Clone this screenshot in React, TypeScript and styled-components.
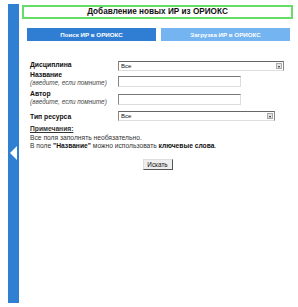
import * as React from "react";
import styled, { createGlobalStyle } from "styled-components";

const Global = createGlobalStyle`
  html, body { margin: 0; padding: 0; background: #fff; }
  body { font-family: "Liberation Sans", Arial, sans-serif; color: #111; }
`;

const Page = styled.div`
  display: flex;
  width: 298px;
  height: 307px;
  padding-top: 4px;
  box-sizing: border-box;
`;

const SideBar = styled.div`
  width: 11px;
  height: 299px;
  margin-left: 8px;
  background: #2f80d3;
  display: flex;
  align-items: center;
  justify-content: center;
  flex-shrink: 0;
`;

const Arrow = styled.div`
  width: 0;
  height: 0;
  border-top: 7px solid transparent;
  border-bottom: 7px solid transparent;
  border-right: 7px solid #fff;
  margin-top: -2px;
`;

const Main = styled.div`
  margin-left: 3px;
  width: 271px;
  display: flex;
  flex-direction: column;
`;

const Title = styled.div`
  border: 2px solid #66dd66;
  height: 10px;
  line-height: 10px;
  text-align: center;
  font-size: 8.2px;
  font-weight: bold;
  margin-top: 1px;
`;

const Tabs = styled.div`
  display: flex;
  gap: 5px;
  margin: 9px 3px 0 5px;
`;

const Tab = styled.div<{ $active?: boolean }>`
  flex: 1;
  height: 13px;
  line-height: 13px;
  text-align: center;
  color: #fff;
  font-size: 6.2px;
  font-weight: bold;
  background: ${(p) => (p.$active ? "#2f7ed4" : "#74b4f0")};
`;

const Form = styled.div`
  display: grid;
  grid-template-columns: 88px 1fr;
  margin: 18px 0 0 8px;
  align-items: start;
`;

const Label = styled.div`
  font-size: 6.8px;
  font-weight: bold;
  line-height: 8px;
`;

const Hint = styled.div`
  font-size: 6.4px;
  font-style: italic;
  line-height: 8px;
  color: #444;
  white-space: nowrap;
`;

const Select = styled.div<{ $w: number }>`
  width: ${(p) => p.$w}px;
  height: 8px;
  border: 1px solid #888;
  border-top-color: #666;
  border-bottom-color: #ddd;
  font-size: 6px;
  line-height: 8px;
  padding-left: 2px;
  position: relative;
`;

const DropBtn = styled.div`
  position: absolute;
  right: 1px;
  top: 1px;
  width: 6px;
  height: 6px;
  background: #e4e4e4;
  border: 1px solid #aaa;
  box-sizing: border-box;
  &::after {
    content: "";
    position: absolute;
    left: 1px;
    top: 2px;
    border-left: 1.5px solid transparent;
    border-right: 1.5px solid transparent;
    border-top: 2px solid #222;
  }
`;

const Input = styled.div`
  width: 121px;
  height: 9px;
  border: 1px solid #ddd;
  border-top: 1px solid #777;
  border-left: 1px solid #888;
`;

const Row = styled.div<{ $h: number }>`
  display: contents;
  & > * { min-height: ${(p) => p.$h}px; }
`;

const Cell = styled.div<{ $pt?: number }>`
  box-sizing: border-box;
  padding-top: ${(p) => p.$pt ?? 0}px;
`;

const Notes = styled.div`
  margin: 4px 0 0 8px;
  font-size: 6.7px;
  line-height: 8.5px;
  color: #333;
  white-space: nowrap;
`;

const NoteHead = styled.div`
  font-weight: bold;
  text-decoration: underline;
`;

const Strong = styled.b`
  color: #111;
`;

const Actions = styled.div`
  display: flex;
  justify-content: center;
  margin-top: 8px;
`;

const Button = styled.div`
  width: 28px;
  height: 9px;
  line-height: 9px;
  text-align: center;
  font-size: 6.4px;
  background: #eee;
  border: 1px solid #ddd;
  border-right-color: #555;
  border-bottom-color: #555;
`;

export default function App() {
  return (
    <>
      <Global />
      <Page>
        <SideBar>
          <Arrow />
        </SideBar>
        <Main>
          <Title>Добавление новых ИР из ОРИОКС</Title>
          <Tabs>
            <Tab $active>Поиск ИР в ОРИОКС</Tab>
            <Tab>Загрузка ИР в ОРИОКС</Tab>
          </Tabs>
          <Form>
            <Row $h={12}>
              <Cell $pt={2}><Label>Дисциплина</Label></Cell>
              <Cell $pt={2}><Select $w={162}>Все<DropBtn /></Select></Cell>
            </Row>
            <Row $h={19}>
              <Cell><Label>Название</Label><Hint>(введите, если помните)</Hint></Cell>
              <Cell $pt={5}><Input /></Cell>
            </Row>
            <Row $h={20}>
              <Cell><Label>Автор</Label><Hint>(введите, если помните)</Hint></Cell>
              <Cell $pt={4}><Input /></Cell>
            </Row>
            <Row $h={10}>
              <Cell $pt={3}><Label>Тип ресурса</Label></Cell>
              <Cell $pt={1}><Select $w={153}>Все<DropBtn /></Select></Cell>
            </Row>
          </Form>
          <Notes>
            <NoteHead>Примечания:</NoteHead>
            <div>Все поля заполнять необязательно.</div>
            <div>В поле <Strong>"Название"</Strong> можно использовать <Strong>ключевые слова</Strong>.</div>
          </Notes>
          <Actions>
            <Button>Искать</Button>
          </Actions>
        </Main>
      </Page>
    </>
  );
}
